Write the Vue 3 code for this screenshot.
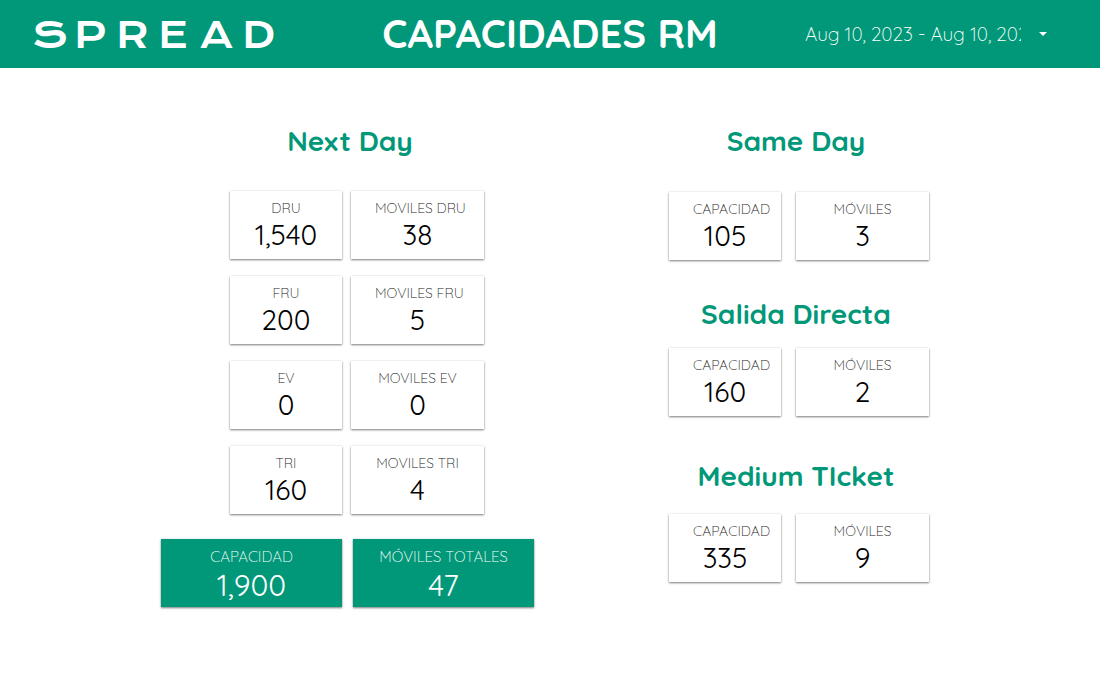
<script setup>
const brand = 'SPREAD'

const nextDay = [
  [{ label: 'DRU', value: '1,540' }, { label: 'MOVILES DRU', value: '38' }],
  [{ label: 'FRU', value: '200' }, { label: 'MOVILES FRU', value: '5' }],
  [{ label: 'EV', value: '0' }, { label: 'MOVILES EV', value: '0' }],
  [{ label: 'TRI', value: '160' }, { label: 'MOVILES TRI', value: '4' }]
]

const totals = [
  { label: 'CAPACIDAD', value: '1,900' },
  { label: 'MÓVILES TOTALES', value: '47' }
]

const groups = [
  { id: 'same', title: 'Same Day', capacity: '105', vehicles: '3' },
  { id: 'direct', title: 'Salida Directa', capacity: '160', vehicles: '2' },
  { id: 'medium', title: 'Medium TIcket', capacity: '335', vehicles: '9' }
]
</script>

<template>
  <div class="report">
    <header class="topbar">
      <div class="brand" role="img" aria-label="SPREAD">
        <span v-for="(letter, i) in brand" :key="i">{{ letter }}</span>
      </div>
      <h1 class="title">CAPACIDADES RM</h1>
      <div class="range">
        <button type="button" class="range-button" aria-haspopup="dialog">
          <span class="range-text">Aug 10, 2023 - Aug 10, 2023</span>
          <svg class="caret" width="8" height="4" viewBox="0 0 8 4" aria-hidden="true">
            <path d="M0 0h8L4 4z" fill="currentColor" />
          </svg>
        </button>
      </div>
    </header>

    <main class="board">
      <section class="next">
        <h2 class="heading">Next Day</h2>
        <div class="rows">
          <div v-for="(row, i) in nextDay" :key="i" class="row">
            <div v-for="card in row" :key="card.label" class="card">
              <div class="label">{{ card.label }}</div>
              <div class="value">{{ card.value }}</div>
            </div>
          </div>
        </div>
        <div class="totals">
          <div v-for="card in totals" :key="card.label" class="card total">
            <div class="label">{{ card.label }}</div>
            <div class="value">{{ card.value }}</div>
          </div>
        </div>
      </section>

      <div class="side">
        <section v-for="g in groups" :key="g.id" class="group" :class="g.id">
          <h2 class="heading">{{ g.title }}</h2>
          <div class="pair">
            <div class="card">
              <div class="label">CAPACIDAD</div>
              <div class="value">{{ g.capacity }}</div>
            </div>
            <div class="card">
              <div class="label">MÓVILES</div>
              <div class="value">{{ g.vehicles }}</div>
            </div>
          </div>
        </section>
      </div>
    </main>
  </div>
</template>

<style>
body {
  margin: 0;
  background: #fff;
}
</style>

<style scoped>
.report {
  font-family: Quicksand, Lato, "Open Sans", sans-serif;
  color: #000;
}

.topbar {
  display: grid;
  grid-template-columns: 1fr auto 1fr;
  align-items: center;
  height: 68px;
  padding: 0 30px;
  background: #009879;
  color: #fff;
}

.brand {
  display: grid;
  grid-template-columns: repeat(6, 42px);
  justify-items: start;
  padding: 2px 0 0 2px;
  font-family: "Krona One", Syncopate, Montserrat, Inter, "Liberation Sans", sans-serif;
  font-size: 36px;
  line-height: 48px;
  font-weight: 400;
}

.title {
  align-self: start;
  margin: 0;
  font-size: 40px;
  line-height: 66px;
  font-weight: 700;
  white-space: nowrap;
}

.range {
  display: flex;
  justify-content: flex-end;
  padding-right: 18px;
}

.range-button {
  display: flex;
  align-items: center;
  justify-content: space-between;
  width: 247px;
  height: 36px;
  padding: 0 5px 0 0;
  border: 0;
  background: transparent;
  color: inherit;
  font: inherit;
  font-size: 19px;
  font-weight: 300;
  text-align: left;
  cursor: pointer;
}

.range-text {
  width: 216px;
  overflow: hidden;
  white-space: nowrap;
}

.board {
  display: flex;
  justify-content: center;
  gap: 135px;
  padding: 55px 10px 40px 0;
}

.heading {
  margin: 0;
  color: #009879;
  font-size: 28px;
  line-height: 36px;
  font-weight: 700;
  text-align: center;
}

.next .heading {
  padding-left: 5px;
}

.rows {
  display: grid;
  gap: 17px;
  margin-top: 32px;
}

.row {
  display: grid;
  grid-template-columns: 112px 133px;
  gap: 9px;
  padding-left: 69px;
}

.totals {
  display: grid;
  grid-template-columns: 181px 181px;
  gap: 11px;
  margin-top: 25px;
}

.card {
  padding: 8px 24px 6px;
  background: #fff;
  box-shadow: 0 1px 2px rgba(0, 0, 0, 0.5), 0 0 2px rgba(0, 0, 0, 0.08);
  white-space: nowrap;
}

.label {
  display: flex;
  justify-content: safe center;
  color: #222;
  font-size: 14px;
  line-height: 18px;
  font-weight: 300;
}

.value {
  font-size: 28px;
  line-height: 36px;
  font-weight: 400;
  text-align: center;
}

.total {
  padding: 8px 24px 4px;
  background: #009879;
  color: #fff;
}

.total .label {
  color: #fff;
  font-size: 15px;
  line-height: 20px;
}

.total .value {
  font-size: 30px;
}

.side .heading {
  padding-right: 6px;
}

.pair {
  display: grid;
  grid-template-columns: 112px 133px;
  gap: 15px;
}

.same .pair {
  margin-top: 33px;
}

.direct {
  margin-top: 36px;
}

.direct .pair {
  margin-top: 16px;
}

.medium {
  margin-top: 42px;
}

.medium .pair {
  margin-top: 20px;
}
</style>
